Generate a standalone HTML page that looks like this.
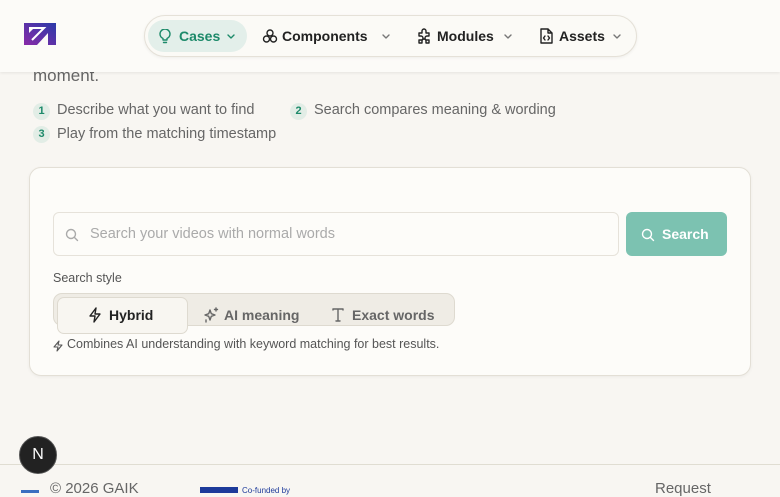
<!DOCTYPE html>
<html><head><meta charset="utf-8"><style>
*{box-sizing:border-box;margin:0;padding:0}
body{width:780px;height:493px;overflow:hidden;background:#f8f6f2;font-family:"Liberation Sans",sans-serif;position:relative;color:#555}
.hdr{position:absolute;left:0;top:0;width:780px;height:72px;background:#fcfbf8;box-shadow:0 1px 3px rgba(0,0,0,.08)}
.nav{position:absolute;left:144px;top:15px;width:493px;height:42px;border:1px solid #e5e1d8;border-radius:21px;background:#fbfaf6;box-shadow:0 1px 3px rgba(0,0,0,.06)}
.a{position:absolute;white-space:nowrap}
.nt{position:absolute;top:12px;font-size:14.5px;font-weight:bold;color:#222;white-space:nowrap}
.t{position:absolute;font-size:14.5px;color:#666;white-space:nowrap}
.b{position:absolute;width:17px;height:17px;border-radius:50%;background:#e2ede6;color:#1d8a6a;font-size:11px;font-weight:bold;text-align:center;line-height:17px}
.card{position:absolute;left:29px;top:167px;width:722px;height:209px;background:#fdfcf9;border:1px solid #e3dfd6;border-radius:12px;box-shadow:0 1px 3px rgba(0,0,0,.05)}
svg.i{position:absolute;fill:none;stroke-width:1.4;stroke-linecap:round;stroke-linejoin:round}
</style></head><body>
<div class="t" style="left:33px;top:66px;font-size:17px;color:#666">moment.</div>
<div class="hdr">
<svg style="position:absolute;left:24px;top:23px" width="32" height="22" viewBox="0 0 32 22"><defs><linearGradient id="g" x1="0" y1="1" x2="1" y2="0"><stop offset="0" stop-color="#8a2aa8"/><stop offset="1" stop-color="#2a3aa8"/></linearGradient></defs><path d="M0 0H32V22H24L24 10 13 22H0ZM5 5V10L10 5Z" fill="url(#g)"/><path d="M5 5H20L8 17" stroke="#fff" stroke-width="2" fill="none"/></svg>
<div class="nav">
<div class="a" style="left:3px;top:4px;width:99px;height:32px;background:#e3efea;border-radius:16px"></div>
<svg class="i" style="left:14px;top:13px;stroke:#1d8a6a" width="12" height="15" viewBox="0 0 12 15"><path d="M4 11V9.5C2 8.5 1 7 1 5a5 5 0 0 1 10 0c0 2-1 3.5-3 4.5V11ZM4.5 13.5h3"/></svg>
<div class="nt" style="left:34px;color:#1d8a6a;font-size:14px">Cases</div>
<svg class="i" style="left:82px;top:18px;stroke:#1d8a6a" width="8" height="5" viewBox="0 0 8 5"><path d="M1 1l3 3 3-3"/></svg>
<svg class="i" style="left:117px;top:12px;stroke:#222" width="16" height="16" viewBox="0 0 16 16"><circle cx="8" cy="5" r="3"/><circle cx="4.5" cy="11" r="3"/><circle cx="11.5" cy="11" r="3"/></svg>
<div class="nt" style="left:137px;font-size:14px">Components</div>
<svg class="i" style="left:237px;top:18px;stroke:#777" width="8" height="5" viewBox="0 0 8 5"><path d="M1 1l3 3 3-3"/></svg>
<svg class="i" style="left:271px;top:12px;stroke:#222" width="16" height="16" viewBox="0 0 16 16"><path d="M3 5h3V3a2 2 0 0 1 4 0v2h3v3h-2a2 2 0 0 0 0 4h2v3H10v-2a2 2 0 0 0-4 0v2H3v-3h2a2 2 0 0 0 0-4H3Z"/></svg>
<div class="nt" style="left:292px;font-size:14px">Modules</div>
<svg class="i" style="left:359px;top:18px;stroke:#777" width="8" height="5" viewBox="0 0 8 5"><path d="M1 1l3 3 3-3"/></svg>
<svg class="i" style="left:395px;top:12px;stroke:#222" width="13" height="16" viewBox="0 0 13 16"><path d="M1 1h7l4 4v10H1ZM8 1v4h4M5 8l-1.5 2L5 12M8 8l1.5 2L8 12"/></svg>
<div class="nt" style="left:414px;font-size:14px">Assets</div>
<svg class="i" style="left:468px;top:18px;stroke:#777" width="8" height="5" viewBox="0 0 8 5"><path d="M1 1l3 3 3-3"/></svg>
</div></div>
<div class="b" style="left:33px;top:103px">1</div><div class="t" style="left:57px;top:102px">Describe what you want to find</div>
<div class="b" style="left:290px;top:103px">2</div><div class="t" style="left:314px;top:102px">Search compares meaning &amp; wording</div>
<div class="b" style="left:33px;top:126px">3</div><div class="t" style="left:57px;top:126px">Play from the matching timestamp</div>
<div class="card">
<div style="position:absolute;left:23px;top:44px;width:566px;height:44px;border:1px solid #e6e2da;border-radius:6px;background:#fdfcf9"></div>
<svg class="i" style="left:35px;top:60px;stroke:#aaa" width="14" height="14" viewBox="0 0 14 14"><circle cx="6" cy="6" r="4.5"/><path d="M9.5 9.5l3 3"/></svg>
<div class="t" style="left:60px;top:58px;color:#aaa">Search your videos with normal words</div>
<div style="position:absolute;left:596px;top:44px;width:101px;height:44px;border-radius:6px;background:#7cc2b1"></div>
<svg class="i" style="left:611px;top:60px;stroke:#fff" width="14" height="14" viewBox="0 0 14 14"><circle cx="6" cy="6" r="4.5"/><path d="M9.5 9.5l3 3"/></svg>
<div class="t" style="left:632px;top:58px;color:#fff;font-weight:bold;font-size:14px">Search</div>
<div class="t" style="left:23px;top:103px;font-size:12.5px;color:#555">Search style</div>
<div style="position:absolute;left:23px;top:125px;width:402px;height:33px;border:1px solid #dedad0;border-radius:9px;background:#efece5"></div>
<div style="position:absolute;left:27px;top:129px;width:131px;height:37px;border:1px solid #dedad0;border-radius:7px;background:#f8f6f1"></div>
<svg class="i" style="left:58px;top:139px;stroke:#222" width="14" height="16" viewBox="0 0 14 16"><path d="M8 1L2 9h5l-1 6 6-8H7Z"/></svg>
<div class="t" style="left:79px;top:139px;font-weight:bold;font-size:14px;color:#222">Hybrid</div>
<svg class="i" style="left:173px;top:139px;stroke:#666" width="16" height="16" viewBox="0 0 16 16"><path d="M7 3l1.3 3.7L12 8l-3.7 1.3L7 13l-1.3-3.7L2 8l3.7-1.3ZM13 1v3M11.5 2.5h3M3 13v2"/></svg>
<div class="t" style="left:194px;top:139px;font-weight:bold;font-size:14px;color:#666">AI meaning</div>
<svg class="i" style="left:302px;top:140px;stroke:#666" width="12" height="14" viewBox="0 0 12 14"><path d="M1 2V1h10v1M6 1v12M4 13h4"/></svg>
<div class="t" style="left:322px;top:139px;font-weight:bold;font-size:14px;color:#666">Exact words</div>
<svg class="i" style="left:23px;top:172px;stroke:#555;stroke-width:1.1" width="10" height="12" viewBox="0 0 10 12"><path d="M6 1L1 7h4l-1 4 5-6H5Z"/></svg>
<div class="t" style="left:37px;top:169px;font-size:12.5px;color:#555">Combines AI understanding with keyword matching for best results.</div>
</div>
<div style="position:absolute;left:0;top:464px;width:780px;height:1px;background:#e0ddd2"></div>
<div style="position:absolute;left:19px;top:436px;width:38px;height:38px;border-radius:50%;background:#222;border:1px solid #555;color:#fff;text-align:center;line-height:36px;font-size:16px">N</div>
<div class="t" style="left:50px;top:480px;font-size:15px">© 2026 GAIK</div>
<div style="position:absolute;left:21px;top:490px;width:18px;height:3px;background:#3a6fc0"></div>
<div style="position:absolute;left:200px;top:487px;width:38px;height:6px;background:#1d3a9a"></div>
<div class="t" style="left:242px;top:486px;font-size:8px;color:#1d3a9a">Co-funded by</div>
<div class="t" style="left:655px;top:480px;font-size:15px">Request</div>
</body></html>
